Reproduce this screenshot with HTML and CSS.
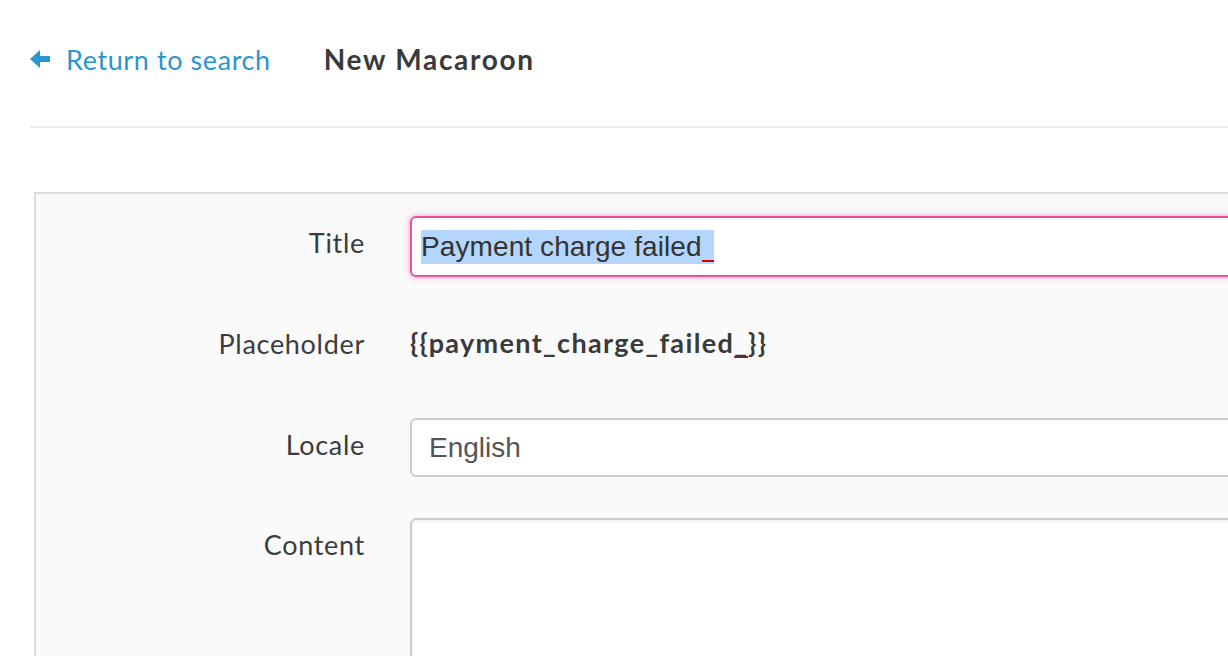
FILE: index.html
```html
<!DOCTYPE html>
<html>
<head>
<meta charset="utf-8">
<link rel="stylesheet" href="styles.css">
</head>
<body>
<div class="page">
  <header class="topbar">
    <a class="back" href="#">
      <svg class="back-icon" width="20" height="18" viewBox="0 0 20 18"><polygon points="0,9 10,0 10,6 20,6 20,12 10,12 10,18" fill="#2b95cd"/></svg>
      <span>Return to search</span>
    </a>
    <h1 class="page-title">New Macaroon</h1>
  </header>
  <div class="rule"></div>
  <form class="panel">
    <div class="row">
      <label class="label">Title</label>
      <div class="field">
        <div class="input input-focus"><span class="sel">Payment charge failed<span class="spell"> </span></span></div>
      </div>
    </div>
    <div class="row">
      <label class="label">Placeholder</label>
      <div class="field">
        <div class="static">{{payment_charge_failed<span class="spell">_</span>}}</div>
      </div>
    </div>
    <div class="row">
      <label class="label">Locale</label>
      <div class="field">
        <div class="input select">English</div>
      </div>
    </div>
    <div class="row">
      <label class="label">Content</label>
      <div class="field">
        <div class="textarea"></div>
      </div>
    </div>
  </form>
</div>
</body>
</html>
```
FILE: styles.css
```css
html, body {
  margin: 0;
  padding: 0;
  background: #fff;
  overflow: hidden;
}
body {
  font-family: Lato, "Open Sans", sans-serif;
  color: #333;
}
.page {
  width: 1320px;
  padding-left: 30px;
}
.topbar {
  display: flex;
  align-items: center;
  height: 118px;
}
.back {
  display: flex;
  align-items: center;
  gap: 16px;
  color: #2b95cd;
  text-decoration: none;
  font-size: 27px;
  letter-spacing: 0.6px;
}
.back-icon {
  display: block;
}
.page-title {
  margin: 0 0 0 53px;
  font-size: 28px;
  font-weight: 700;
  color: #383a3c;
  letter-spacing: 1.7px;
}
.rule {
  height: 2px;
  background: #ececec;
  margin-top: 8px;
}
.panel {
  margin-top: 64px;
  margin-left: 4px;
  border: 2px solid #ddd;
  background: #fafafa;
  padding: 22px 0 40px 0;
  height: 600px;
}
.row {
  display: grid;
  grid-template-columns: 329px 1fr;
  column-gap: 45px;
  margin-bottom: 40px;
}
.label {
  text-align: right;
  font-size: 27px;
  line-height: 32px;
  color: #3a3d3f;
  padding-top: 11px;
  letter-spacing: 0.7px;
}
.field {
  min-width: 0;
}
.input {
  height: 59px;
  box-sizing: border-box;
  border: 2px solid #ccc;
  border-radius: 6px;
  background: #fff;
  font-family: "Liberation Sans", Arial, sans-serif;
  font-size: 28px;
  color: #555;
  padding: 0 16px;
  display: flex;
  align-items: center;
}
.input-focus {
  height: 61px;
  border-color: #ec4f9c;
  box-shadow: 0 0 6px rgba(236, 79, 156, 0.55);
  color: #333;
  padding-left: 9px;
  letter-spacing: 0.1px;
}
.select {
  padding-left: 17px;
  color: #555;
  margin-bottom: 1px;
}
.sel {
  background: #b4d5fc;
  padding: 2px 0;
  line-height: 30px;
}
.input .spell {
  display: inline-block;
  width: 12px;
  height: 27px;
  border-bottom: 2px solid #d40000;
  vertical-align: -6px;
}
.static {
  font-size: 27px;
  line-height: 32px;
  font-weight: 700;
  color: #383a3c;
  padding-top: 10px;
  height: 61px;
  box-sizing: border-box;
  letter-spacing: 1.35px;
}
.static .spell {
  text-decoration: underline;
  text-decoration-color: #d40000;
  text-decoration-thickness: 2px;
  text-underline-offset: 3px;
}
.textarea {
  height: 300px;
  border: 2px solid #ccc;
  border-radius: 6px;
  background: #fff;
  box-shadow: inset 0 2px 3px rgba(0,0,0,0.06);
}
```
